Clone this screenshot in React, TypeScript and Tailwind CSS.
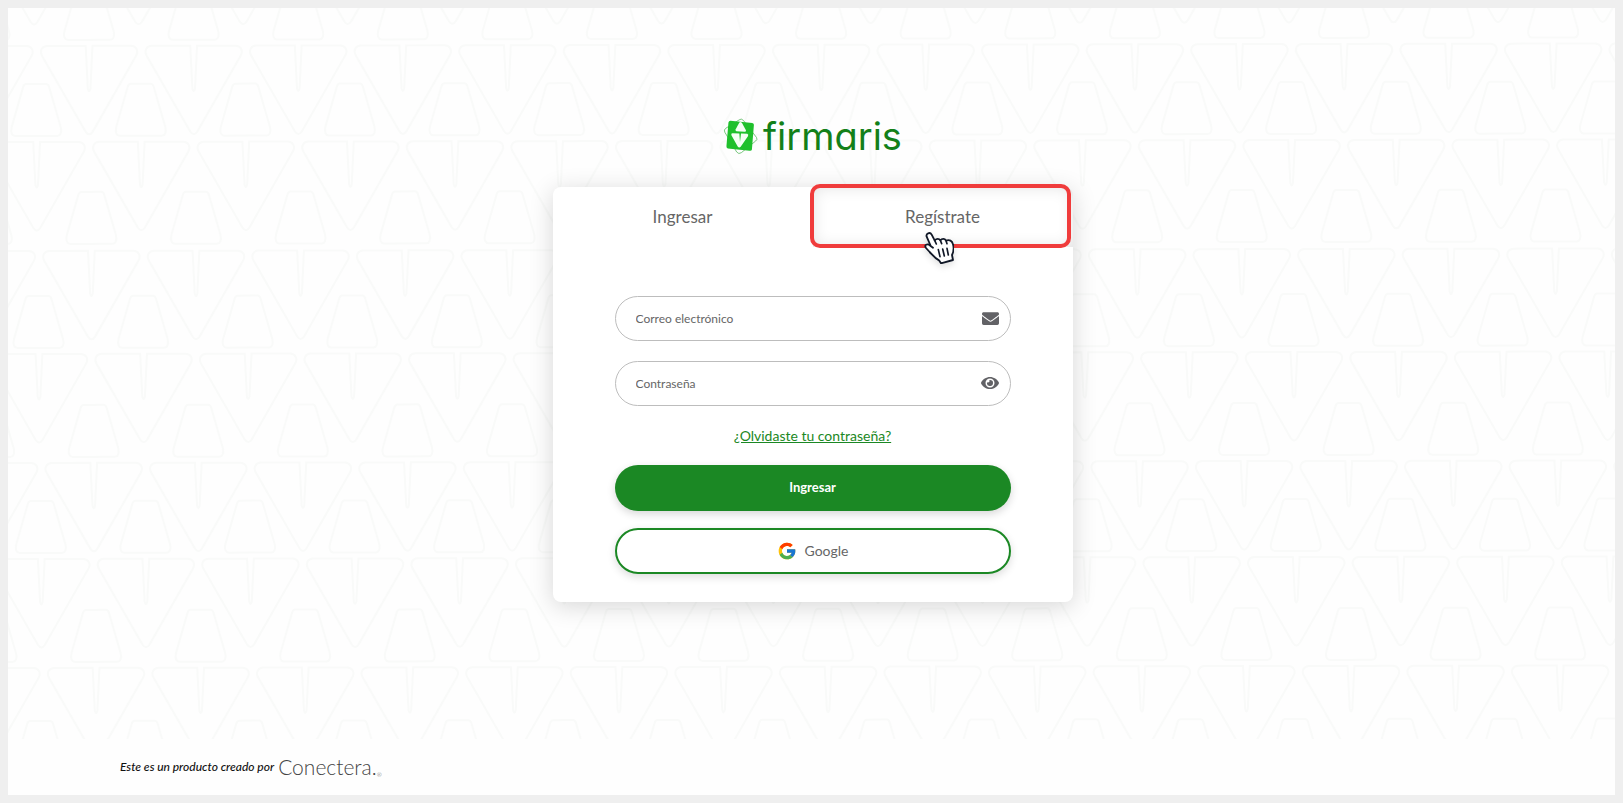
import React, { useState } from 'react';
import { FaEnvelope, FaEye } from 'react-icons/fa';
import { FcGoogle } from 'react-icons/fc';

// v: first triangle of the row, t: first trapezoid of the row
const patternRows = [
  { v: [26, -72], t: [81, -20] },
  { v: [81, 38], t: [28, 76] },
  { v: [133, 134], t: [83, 184] },
  { v: [83, 243], t: [30, 288] },
  { v: [135, 346], t: [85, 397] },
  { v: [85, 455], t: [32, 493] },
  { v: [137, 551], t: [87, 602] },
  { v: [87, 660], t: [31, 713] },
];
const PERIOD = 104.58;
const columns = Array.from({ length: 19 }, (_, i) => i - 2);

const BackgroundPattern: React.FC = () => (
  <svg
    className="absolute inset-0 h-full w-full"
    viewBox="0 0 1607 731"
    preserveAspectRatio="xMidYMid slice"
    fill="none"
    stroke="#f9faf9"
    strokeWidth="2"
    aria-hidden="true"
  >
    <defs>
      <path
        id="triangle"
        d="M-3.4 0H-42C-47 0-50 5-47 10L-3.4 86Q0 91 3.4 86L47 10C50 5 47 0 42 0H3.4L1.3 43Q0 48-1.3 43Z"
      />
      <path
        id="trapezoid"
        d="M-10 0H10Q12 0 13 3L24.500 43C26 49 24 52 21 52H-21C-24 52-26 49-24.500 43L-13 3Q-12 0-10 0Z"
      />
    </defs>
    <g transform="rotate(-0.09)">
      {patternRows.map(({ v, t }) =>
        columns.map((col) => (
          <React.Fragment key={`${v[1]}-${col}`}>
            <use href="#triangle" x={v[0] + col * PERIOD} y={v[1]} />
            <use href="#trapezoid" x={t[0] + col * PERIOD} y={t[1]} />
          </React.Fragment>
        ))
      )}
    </g>
  </svg>
);

const LogoMark: React.FC = () => (
  <svg className="h-[38px] w-9" viewBox="15 20 108 115" aria-hidden="true">
    <path
      d="M63 29Q70 23 76 30L116 82Q120 88 113 93L70 128Q62 134 56 126L20 66Q16 59 23 54Z"
      fill="none"
      stroke="#5dbb63"
      strokeWidth="2.500"
    />
    <path d="M37 31L103 38Q109 39 108 44L102 118Q101 123 95 122L29 115Q24 114 25 108L31 37Q32 31 37 31Z" fill="#1fc02c" />
    <path d="M64 37Q68 33 72 38L84 60Q85 65 80 65L55 63Q51 62 53 57Z" fill="#f4fff4" />
    <path d="M43 69L64 70L66 96L69 70L88 71Q93 73 90 78L68 110Q63 115 59 109L40 75Q38 69 43 69Z" fill="#f4fff4" />
  </svg>
);

const HandCursor: React.FC = () => (
  <svg className="h-8 w-[30px] drop-shadow-md" viewBox="72 35 90 96" aria-hidden="true">
    <path
      d="M91 74L80 49C77 39 90 34 95 43L104 60C110 54 117 54 121 60C126 54 134 54 138 61C148 56 157 62 159 72C163 86 160 96 156 104L159 119L123 129L117 120C103 113 97 103 89 95L78 83C71 73 82 69 91 76L99 82"
      fill="#fff"
      stroke="#111827"
      strokeWidth="5.500"
      strokeLinecap="round"
      strokeLinejoin="round"
    />
    <path
      d="M104 60L109 71M121 60L125 70M138 61L141 70M115 88L120 109M128 86L133 107M141 84L145 104"
      fill="none"
      stroke="#111827"
      strokeWidth="5"
      strokeLinecap="round"
    />
  </svg>
);

const App: React.FC = () => {
  const [email, setEmail] = useState('');
  const [password, setPassword] = useState('');
  const [showPassword, setShowPassword] = useState(false);

  return (
    <div className="flex min-h-screen flex-col border-8 border-[#efefef] bg-[#fefefe] font-['Lato',sans-serif] text-[#666]">
      <main className="relative flex flex-1 flex-col items-center overflow-hidden pt-24 pr-4 pb-32 pl-[18px]">
        <BackgroundPattern />

        <h1 className="relative flex h-16 items-center gap-1 text-[#138019]">
          <LogoMark />
          <span className="font-['Inter',sans-serif] text-[38px] leading-10 font-normal [font-feature-settings:'cv11']">
            firmaris
          </span>
        </h1>

        <section className="relative mt-[19px] w-full max-w-[520px] rounded-lg bg-white shadow-[0_4px_24px_rgba(0,0,0,0.16)]">
          <div className="grid grid-cols-2">
            <button type="button" className="h-[60px] text-[17px]">
              Ingresar
            </button>
            <div className="relative">
              <button
                type="button"
                className="h-[60px] w-full rounded-tr-lg text-[17px] shadow-[inset_0_0_16px_rgba(0,0,0,0.12)]"
              >
                Regístrate
              </button>
              <div className="pointer-events-none absolute -top-[3px] right-0.5 -bottom-px -left-[3px] rounded-[10px] border-4 border-[#f03c3c]" />
              <div className="pointer-events-none absolute top-[45px] left-[111px]">
                <HandCursor />
              </div>
            </div>
          </div>

          <form className="flex flex-col px-[62px] pt-[49px] pb-7" onSubmit={(e) => e.preventDefault()}>
            <div className="relative">
              <input
                type="email"
                aria-label="Correo electrónico"
                placeholder="Correo electrónico"
                value={email}
                onChange={(e) => setEmail(e.target.value)}
                className="h-[45px] w-full rounded-full border border-[#bdbdbd] bg-white pr-12 pl-5 text-xs placeholder:text-[#666]"
              />
              <FaEnvelope className="absolute top-3.5 right-3 h-[17px] w-[17px] text-[#626266]" />
            </div>

            <div className="relative mt-5">
              <input
                type={showPassword ? 'text' : 'password'}
                aria-label="Contraseña"
                placeholder="Contraseña"
                value={password}
                onChange={(e) => setPassword(e.target.value)}
                className="h-[45px] w-full rounded-full border border-[#bdbdbd] bg-white pr-12 pl-5 text-xs placeholder:text-[#666]"
              />
              <button
                type="button"
                aria-label="Contraseña"
                onClick={() => setShowPassword((prev) => !prev)}
                className="absolute top-3.5 right-3"
              >
                <FaEye className="h-4 w-[18px] text-[#626266]" />
              </button>
            </div>

            <a href="#" className="mt-5 self-center text-sm leading-5 text-[#1b8824] underline">
              ¿Olvidaste tu contraseña?
            </a>

            <button
              type="submit"
              className="mt-[19px] h-[46px] w-full rounded-full bg-[#1b8824] text-[13px] font-bold text-white shadow-[0_3px_8px_rgba(0,0,0,0.16)]"
            >
              Ingresar
            </button>
            <button
              type="button"
              className="mt-[17px] flex h-[46px] w-full items-center justify-center gap-2 rounded-full border-2 border-[#1b8824] bg-white text-sm shadow-[0_3px_8px_rgba(0,0,0,0.14)]"
            >
              <FcGoogle className="h-5 w-5" />
              Google
            </button>
          </form>
        </section>
      </main>

      <footer className="flex h-14 items-center gap-1 px-28 text-[#111]">
        <span className="text-xs font-medium italic">Este es un producto creado por</span>
        <span className="flex items-end font-light text-[#444]">
          <span className="text-[21px] leading-6">Conectera.</span>
          <span className="text-[6px]">®</span>
        </span>
      </footer>
    </div>
  );
};

export default App;
